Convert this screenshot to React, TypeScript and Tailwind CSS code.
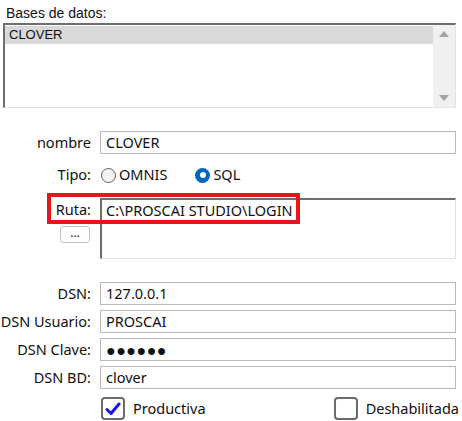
import React from 'react';

const font = { fontFamily: '"Noto Sans", "Open Sans", sans-serif' };

const Field: React.FC<{ label: string; value: string; secret?: boolean }> = ({ label, value, secret }) => (
  <div className="flex items-center h-[23px]">
    <div className="w-[92px] text-right pr-[1px] text-[14.5px] text-[#111] whitespace-nowrap">{label}</div>
    <div className="ml-[8px] w-[356px] h-[23px] border border-[#b9b9b9] bg-white flex items-center px-[5px] text-[14.5px] text-[#111] whitespace-nowrap">
      {secret ? <span className="tracking-[0.5px] text-[16px] leading-[16px]">●●●●●●</span> : value}
    </div>
  </div>
);

const Radio: React.FC<{ checked?: boolean; label: string }> = ({ checked, label }) => (
  <div className="flex items-center gap-[3px]">
    {checked ? (
      <span className="w-[15px] h-[15px] rounded-full bg-[#0067c0] flex items-center justify-center">
        <span className="w-[6px] h-[6px] rounded-full bg-white" />
      </span>
    ) : (
      <span className="w-[15px] h-[15px] rounded-full border border-[#5f5f5f] bg-[#f3f3f3]" />
    )}
    <span className="text-[14.5px] text-[#111]">{label}</span>
  </div>
);

const Check: React.FC<{ checked?: boolean; label: string }> = ({ checked, label }) => (
  <div className="flex items-center gap-[8px]">
    <span className="w-[24px] h-[23px] rounded-[4px] border-2 border-[#6b6b6b] bg-white flex items-center justify-center">
      {checked && (
        <svg width="16" height="14" viewBox="0 0 16 14">
          <path d="M2 7.5 L6 11.5 L14 2" fill="none" stroke="#1515e8" strokeWidth="3" strokeLinecap="round" strokeLinejoin="round" />
        </svg>
      )}
    </span>
    <span className="text-[14.5px] text-[#111]">{label}</span>
  </div>
);

export default function App() {
  return (
    <div className="w-[462px] h-[421px] bg-white relative overflow-hidden" style={font}>
      {/* Bases de datos */}
      <div className="pl-[6px] pt-[3px] text-[14px] leading-[20px] text-[#111]" style={{ fontFamily: '"Liberation Sans", Arial, sans-serif' }}>
        Bases de datos:
      </div>
      <div className="ml-[3px] w-[453px] h-[85px] border-t-2 border-l-2 border-t-[#6e6e6e] border-l-[#6e6e6e] border-r border-b border-r-[#e3e3e3] border-b-[#e3e3e3] bg-white flex">
        <div className="flex-1 pt-[1px]">
          <div className="h-[18px] bg-[#d9d9d9] pl-[4px] text-[13px] leading-[18px] text-[#111]" style={{ fontFamily: '"Liberation Sans", Arial, sans-serif' }}>
            CLOVER
          </div>
        </div>
        <div className="w-[22px] bg-[#f0f0f0] flex flex-col items-center justify-between py-[6px]">
          <svg width="10" height="6" viewBox="0 0 10 6"><path d="M0 6 L5 0 L10 6 Z" fill="#a3a3a3" /></svg>
          <svg width="10" height="6" viewBox="0 0 10 6"><path d="M0 0 L5 6 L10 0 Z" fill="#a3a3a3" /></svg>
        </div>
      </div>

      {/* nombre */}
      <div className="mt-[23px]">
        <Field label="nombre" value="CLOVER" />
      </div>

      {/* Tipo */}
      <div className="mt-[11px] flex items-center h-[20px]">
        <div className="w-[92px] text-right pr-[1px] text-[14.5px] text-[#111]">Tipo:</div>
        <div className="ml-[9px] flex items-center gap-[28px]">
          <Radio label="OMNIS" />
          <Radio checked label="SQL" />
        </div>
      </div>

      {/* Ruta */}
      <div className="mt-[13px] flex relative">
        <div className="w-[92px] flex flex-col items-end pr-[1px]">
          <div className="text-[14.5px] text-[#111] h-[23px] leading-[23px]">Ruta:</div>
          <button className="mt-[5px] mr-[1px] w-[30px] h-[17px] rounded-[3px] border border-[#c4c4c4] bg-[#fdfdfd] text-[12px] leading-[10px] pb-[4px] text-[#111]">...</button>
        </div>
        <div className="ml-[8px] w-[356px] h-[61px] border-t-2 border-l-2 border-t-[#6e6e6e] border-l-[#6e6e6e] border-r border-b border-r-[#e3e3e3] border-b-[#e3e3e3] bg-white px-[4px] text-[14.5px] leading-[21px] text-[#111]">
          C:\PROSCAI STUDIO\LOGIN
        </div>
        {/* highlight */}
        <div className="absolute left-[47px] top-[-5px] w-[253px] h-[31px] border-4 border-[#e8141c] pointer-events-none" />
      </div>

      {/* DSN fields */}
      <div className="mt-[23px] flex flex-col gap-[5px]">
        <Field label="DSN:" value="127.0.0.1" />
        <Field label="DSN Usuario:" value="PROSCAI" />
        <Field label="DSN Clave:" value="" secret />
        <Field label="DSN BD:" value="clover" />
      </div>

      {/* checks */}
      <div className="mt-[8px] ml-[101px] mr-[3px] flex items-center justify-between">
        <Check checked label="Productiva" />
        <Check label="Deshabilitada" />
      </div>
    </div>
  );
}
